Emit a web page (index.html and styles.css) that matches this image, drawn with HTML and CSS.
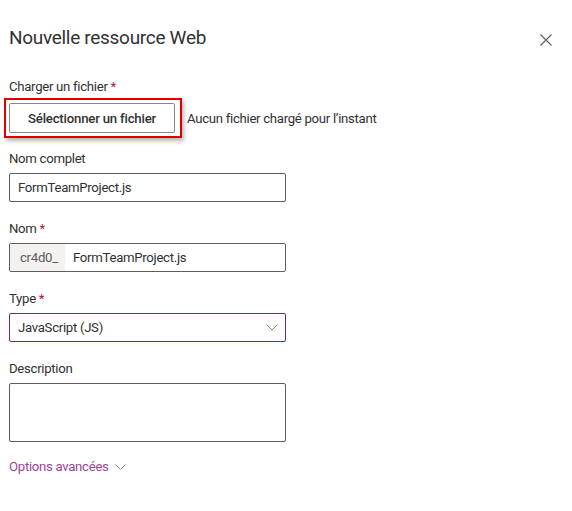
FILE: index.html
```html
<!DOCTYPE html>
<html lang="fr">
<head>
<meta charset="utf-8">
<title>Nouvelle ressource Web</title>
<link rel="stylesheet" href="styles.css">
</head>
<body>
<div class="panel">
  <div class="header">
    <h1 class="title">Nouvelle ressource Web</h1>
    <button class="close" aria-label="Fermer">
      <svg width="12" height="12" viewBox="0 0 12 12"><path d="M0.5 0.5 L11.5 11.5 M11.5 0.5 L0.5 11.5" stroke="#605e5c" stroke-width="1.1" fill="none"/></svg>
    </button>
  </div>

  <div class="label first">Charger un fichier <span class="req">*</span></div>
  <div class="upload-row">
    <div class="highlight">
      <button class="file-btn">Sélectionner un fichier</button>
    </div>
    <span class="file-status">Aucun fichier chargé pour l’instant</span>
  </div>

  <div class="field">
    <div class="label">Nom complet</div>
    <div class="input"><span class="value">FormTeamProject.js</span></div>
  </div>

  <div class="field">
    <div class="label">Nom <span class="req">*</span></div>
    <div class="input"><span class="prefix">cr4d0_</span><span class="value">FormTeamProject.js</span></div>
  </div>

  <div class="field">
    <div class="label">Type <span class="req">*</span></div>
    <div class="input select"><span class="value">JavaScript (JS)</span>
      <svg class="chev" width="12" height="7" viewBox="0 0 12 7"><path d="M0.5 0.5 L6 6 L11.5 0.5" stroke="#8a8886" stroke-width="1" fill="none"/></svg>
    </div>
  </div>

  <div class="field">
    <div class="label">Description</div>
    <div class="input textarea"></div>
  </div>

  <div class="advanced">Options avancées
    <svg class="chev-small" width="11" height="6" viewBox="0 0 11 6"><path d="M0.5 0.5 L5.5 5.5 L10.5 0.5" stroke="#8a8886" stroke-width="1" fill="none"/></svg>
  </div>
</div>
</body>
</html>
```

FILE: styles.css
```css
* { box-sizing: border-box; }
html, body { margin: 0; padding: 0; background: #ffffff; }
body {
  font-family: Roboto, "Liberation Sans", Arial, sans-serif;
  font-size: 13.2px;
  letter-spacing: -0.3px;
  color: #323130;
}
.panel { padding: 24px 0 0 9px; width: 572px; }
.header {
  display: flex;
  align-items: center;
  justify-content: space-between;
  height: 28px;
  padding-right: 20px;
}
.title {
  margin: 0;
  font-size: 19px;
  font-weight: 400;
  line-height: 28px;
  color: #323130;
}
.close {
  border: 0;
  background: transparent;
  padding: 0;
  width: 12px;
  height: 12px;
  display: flex;
  margin-top: 4px;
}
.label {
  line-height: 20px;
  height: 20px;
  margin-bottom: 4px;
  color: #323130;
}
.label.first { margin-top: 25px; margin-bottom: 1px; }
.req { color: #a4262c; }
.upload-row {
  display: flex;
  align-items: center;
  gap: 5px;
}
.highlight {
  margin-left: -5px;
  border: 2px solid #e00000;
  padding: 3px 5px 3px 3px;
  box-shadow: 2px 3px 4px rgba(0,0,0,0.28);
}
.file-btn {
  display: block;
  width: 166px;
  height: 30px;
  border: 1px solid #8a8886;
  border-radius: 2px;
  background: #ffffff;
  font-family: inherit;
  font-size: 13.2px;
  letter-spacing: -0.2px;
  font-weight: 500;
  color: #323130;
  padding: 0;
}
.file-status { color: #323130; }
.field { margin-top: 11px; }
.field + .field { margin-top: 17px; }
.input {
  width: 277px;
  height: 29px;
  border: 1px solid #605e5c;
  border-radius: 2px;
  display: flex;
  align-items: center;
  overflow: hidden;
}
.input .value { padding-left: 8px; }
.prefix {
  background: #f3f2f1;
  color: #605e5c;
  height: 100%;
  display: flex;
  align-items: center;
  padding: 0 9px 0 10px;
  width: 55px;
}
.select {
  border-color: #742774;
  justify-content: space-between;
  padding-right: 7px;
}
.chev { display: block; }
.textarea { height: 59px; }
.advanced {
  margin-top: 15px;
  line-height: 20px;
  color: #9b4596;
  display: flex;
  align-items: center;
  gap: 6px;
}
.chev-small { display: block; }
```
